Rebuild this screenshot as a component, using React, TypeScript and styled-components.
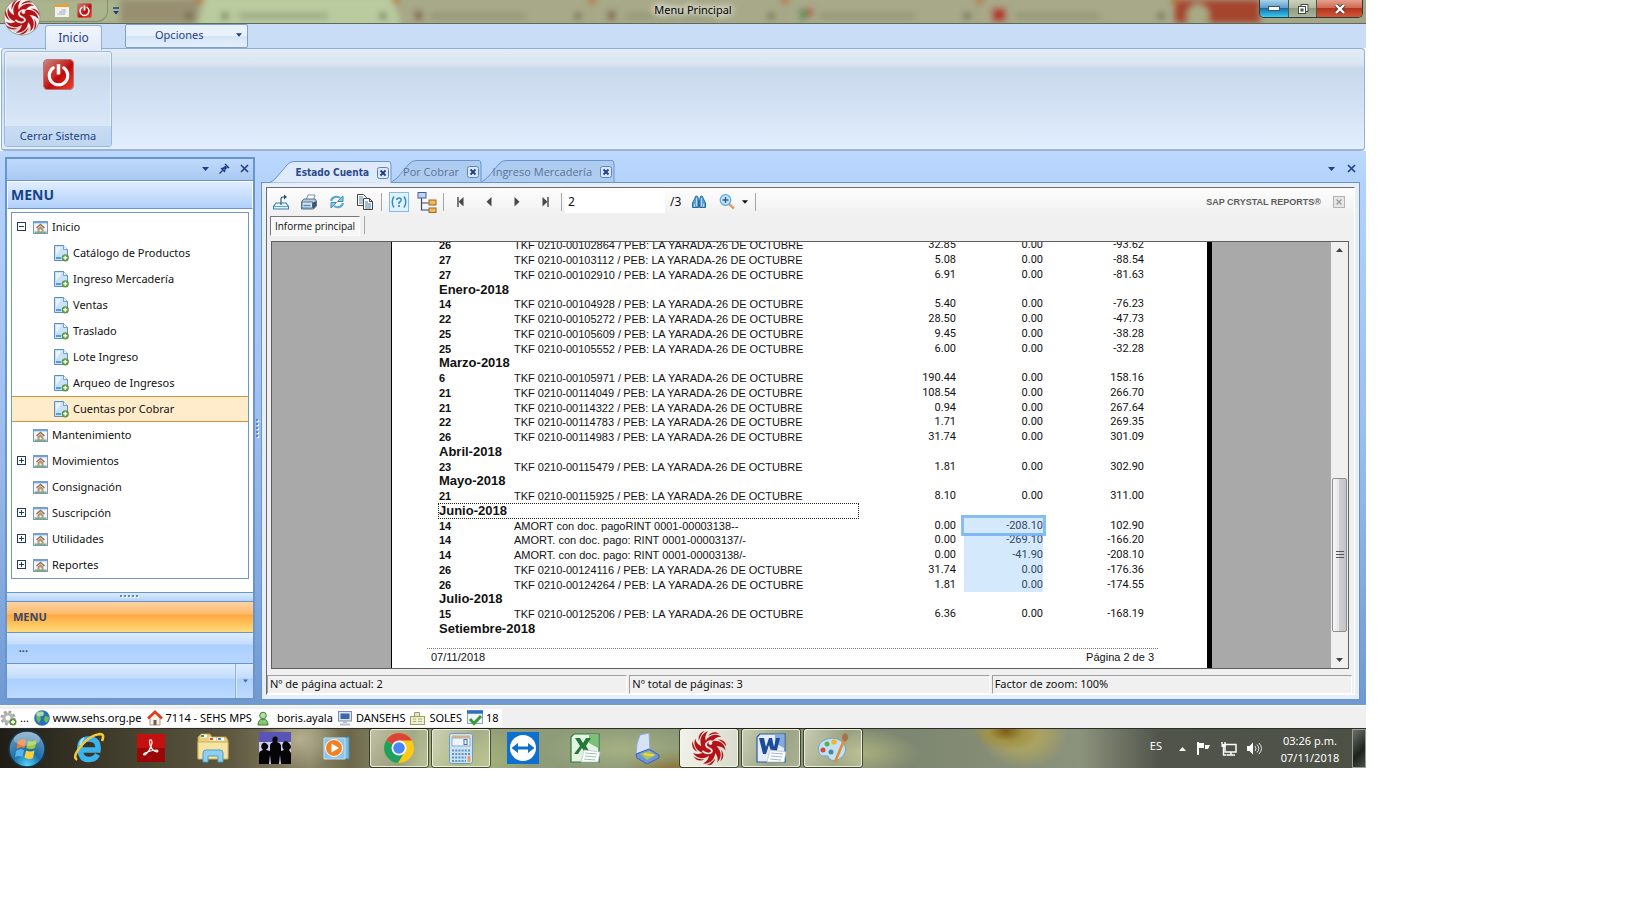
import React from 'react';
import styled, { createGlobalStyle, css } from 'styled-components';

const ui = '"Noto Sans", "Open Sans", sans-serif';
const report = '"Liberation Sans", Arial, sans-serif';
const navy = '#1e3f87';
const line = '#6a94cc';

const GlobalStyle = createGlobalStyle`
  *, *::before, *::after { box-sizing: border-box; }
  body { margin: 0; background: #fff; font-family: ${ui}; font-size: 11px; line-height: 16px; color: #111; }
  button { font: inherit; color: inherit; margin: 0; padding: 0; border: 0; background: none; }
  h1, h2, ul, p { margin: 0; padding: 0; }
  ul { list-style: none; }
  a { color: inherit; text-decoration: none; }
  svg { display: block; flex: none; }
`;

const Page = styled.div`
  min-height: 100vh;
  padding-right: 273px;
`;

/* ---------- title bar ---------- */

const TitleBar = styled.header`
  position: relative;
  display: grid;
  grid-template-columns: 1fr auto 1fr;
  height: 24px;
  padding: 0 3px 0 23px;
  background: #a5a686;
  border-bottom: 1px solid #5d6a63;
`;

const Glass = styled.svg`
  position: absolute;
  inset: 0;
  width: 100%;
  height: 23px;
`;

const OrbButton = styled.button`
  position: absolute;
  z-index: 2;
  left: 3px;
  top: -2px;
`;

const QuickAccess = styled.div`
  display: flex;
  align-items: center;
  gap: 8px;
  width: 85px;
  height: 22px;
  padding-left: 32px;
  border: solid rgba(90, 110, 80, 0.5);
  border-width: 0 1px 1px 0;
  border-radius: 0 0 11px 0;
`;

const QuickArea = styled.div`
  position: relative;
  display: flex;
  align-items: center;
  gap: 5px;
  height: 22px;
`;

const WindowTitle = styled.h1`
  position: relative;
  font-size: 11px;
  font-weight: 400;
  line-height: 20px;
  color: #000;
  text-shadow: 0 0 6px #fff, 0 0 8px #fff, 0 0 10px #fff;
`;

const WindowButtons = styled.div`
  position: relative;
  justify-self: end;
  display: flex;
  height: 18px;
  border: 1px solid #2d3a3a;
  border-top: 0;
  border-radius: 0 0 5px 5px;
  overflow: hidden;
`;

const WindowButton = styled.button<{ $kind: 'min' | 'max' | 'close' }>`
  display: grid;
  place-items: center;
  width: ${p => (p.$kind === 'close' ? 46 : 28)}px;
  border-left: ${p => (p.$kind === 'min' ? '0' : '1px solid #48584f')};
  background: ${p =>
    p.$kind === 'min'
      ? 'linear-gradient(#a9d3ea, #5c9fcd 45%, #1f6ba5 50%, #2fd0f5)'
      : p.$kind === 'max'
        ? 'linear-gradient(#cdd3bb, #b1b99f 45%, #8d9a85 50%, #a9b69b)'
        : 'linear-gradient(#e3a08e, #cf6a53 45%, #b3331b 50%, #d4573a)'};
`;

/* ---------- ribbon ---------- */

const RibbonTabs = styled.nav`
  display: flex;
  gap: 23px;
  height: 24px;
  padding-left: 45px;
  background: #c9ddf6;
  color: ${navy};
`;

const RibbonTab = styled.button`
  width: 57px;
  height: 25px;
  margin-top: 1px;
  z-index: 1;
  border: 1px solid #8fb0dc;
  border-bottom: 0;
  border-radius: 3px 3px 0 0;
  background: linear-gradient(#f2f7fd, #e3ebf6);
  font-size: 12px;
`;

const OptionsButton = styled.button`
  display: flex;
  align-items: center;
  width: 123px;
  height: 24px;
  padding: 0 5px 2px 29px;
  justify-content: space-between;
  border: 1px solid #7f9fce;
  border-radius: 2px;
  background: linear-gradient(#e9f1fb 50%, #d5e4f6 50%, #e4effc);
`;

const RibbonPanel = styled.section`
  display: flex;
  height: 103px;
  padding: 2px;
  margin: 0 1px;
  border: 1px solid #8fb0dc;
  border-bottom: 2px solid #9db2cd;
  border-radius: 4px;
  background: linear-gradient(#e4ecf6, #dbe6f2 14px, #c9d9ec 20px, #d3e2f4 60px, #e3effe);
`;

const RibbonGroup = styled.div`
  display: flex;
  flex-direction: column;
  justify-content: space-between;
  width: 108px;
  border: 1px solid #9ab8dd;
  border-radius: 3px;
  box-shadow: inset 0 0 0 1px rgba(255, 255, 255, 0.5);
  overflow: hidden;
`;

const BigButton = styled.button`
  align-self: center;
  padding-top: 7px;
`;

const GroupLabel = styled.div`
  height: 20px;
  line-height: 19px;
  text-align: center;
  color: ${navy};
  background: linear-gradient(#c8dcf2, #bfd6f0);
`;

/* ---------- workspace ---------- */

const Workspace = styled.main`
  display: flex;
  padding: 6px 6px 5px 5px;
  background: linear-gradient(#bcd8ff, #b4d2fb 30px, #9dbfee 50%, #7099d2);
`;

const Side = styled.aside`
  display: flex;
  flex-direction: column;
  width: 250px;
  flex: none;
  border: 2px solid ${line};
  background: #fff;
`;

const DockBar = styled.div`
  display: flex;
  align-items: center;
  justify-content: flex-end;
  gap: 10px;
  height: 22px;
  padding: 0 4px 2px 0;
  border-bottom: 1px solid ${line};
  background: linear-gradient(#c0d9fb, #a9c9f1);
`;

const SideTitle = styled.h2`
  height: 28px;
  padding-left: 3px;
  border: 1px solid #fff;
  border-bottom: 1px solid ${line};
  background: linear-gradient(#e0edff, #b0d0fa);
  color: #15428b;
  font-size: 14px;
  line-height: 25px;
`;

const Tree = styled.ul`
  margin: 3px 4px 13px;
  padding-top: 1px;
  border: 1px solid #7097c4;
`;

const TreeRow = styled.li<{ $child?: boolean; $active?: boolean }>`
  display: flex;
  align-items: center;
  gap: 4px;
  height: 26px;
  padding-left: ${p => (p.$child ? 42 : 5)}px;
  ${p =>
    p.$active &&
    css`
      background: #ffeccb;
      box-shadow: inset 0 1px #d9913b, inset 0 -1px #d9913b;
    `}
`;

const Toggle = styled.button<{ $hidden?: boolean }>`
  width: 10px;
  height: 10px;
  margin-right: 2px;
  visibility: ${p => (p.$hidden ? 'hidden' : 'visible')};
`;

const Grip = styled.div`
  display: grid;
  place-items: center;
  height: 10px;
  border: solid ${line};
  border-width: 1px 0;
  background: linear-gradient(#dcebff, #b4d2fa);
`;

const StackButton = styled.button<{ $active?: boolean }>`
  height: 31px;
  padding-left: 6px;
  border-bottom: 1px solid ${line};
  text-align: left;
  font-weight: 700;
  color: #32486e;
  background: ${p =>
    p.$active
      ? 'linear-gradient(#fcd3a2, #fdbb6c 12px, #ffa83d 13px, #ffdc7a)'
      : 'linear-gradient(#dfecff, #c3dcfd 11px, #abd0ff 12px, #b7d6ff)'};
`;

const StackFooter = styled.div`
  display: flex;
  justify-content: flex-end;
  flex: 1;
  min-height: 34px;
  background: linear-gradient(#dfecff, #c3dcfd 14px, #abd0ff 15px, #bddaff);
`;

const StackMore = styled.button`
  display: grid;
  place-items: center;
  width: 17px;
  border-left: 1px solid #d9e8fb;
  box-shadow: -1px 0 #8fb2e0;
`;

const Splitter = styled.div`
  display: grid;
  place-items: center;
  width: 6px;
  flex: none;
`;

/* ---------- documents ---------- */

const Documents = styled.section`
  display: flex;
  flex-direction: column;
  flex: 1;
  min-width: 0;
`;

const TabStrip = styled.div`
  display: flex;
  align-items: flex-end;
  height: 25px;
  padding: 0 4px 0 9px;
`;

const DocTab = styled.div<{ $active?: boolean; $width: number }>`
  position: relative;
  display: flex;
  align-items: center;
  justify-content: flex-end;
  gap: 8px;
  width: ${p => p.$width}px;
  height: 22px;
  padding: 2px 3px 0 0;
  margin-bottom: ${p => (p.$active ? -1 : 0)}px;
  z-index: ${p => (p.$active ? 1 : 0)};
  color: ${p => (p.$active ? '#2c4c8c' : '#5a7496')};
  button { position: relative; }
`;

const DocTabLabel = styled.button<{ $active?: boolean }>`
  white-space: nowrap;
  font-family: ${p => (p.$active ? '"DejaVu Sans Condensed", sans-serif' : '"Open Sans", sans-serif')};
  font-size: ${p => (p.$active ? 10 : 11)}px;
  font-weight: ${p => (p.$active ? 700 : 400)};
`;

const TabShape = styled.svg`
  position: absolute;
  inset: 0;
`;

const StripTools = styled.div`
  display: flex;
  align-items: center;
  gap: 12px;
  height: 25px;
  padding-bottom: 2px;
  margin-left: auto;
`;

const DocBody = styled.div`
  display: flex;
  flex-direction: column;
  flex: 1;
  padding: 4px;
  border: 1px solid ${line};
  background: #e6eefa;
`;

const Viewer = styled.div`
  display: flex;
  flex-direction: column;
  border: 1px solid #6c6c6c;
  border-right-color: #fff;
  border-bottom-color: #fff;
  background: #f0f0f0;
`;

const Toolbar = styled.div`
  display: flex;
  align-items: center;
  height: 28px;
  background: linear-gradient(#fdfdfd, #f0f0f0);
`;

const ToolButton = styled.button<{ $wide?: boolean; $framed?: boolean }>`
  display: flex;
  align-items: center;
  justify-content: center;
  gap: 7px;
  width: ${p => (p.$framed ? 20 : p.$wide ? 40 : 28)}px;
  height: 20px;
  ${p =>
    p.$framed &&
    css`
      margin: 0 4px;
      border: 1px solid #7fbdec;
      background: #e2f1fc;
    `}
`;

const Divider = styled.span`
  width: 1px;
  height: 18px;
  margin: 0 3px 0 2px;
  background: #a6a6a6;
`;

const PageInput = styled.input`
  width: 100px;
  height: 22px;
  padding: 0 0 2px 3px;
  border: 0;
  background: #fff;
  font: 12px/20px ${ui};
  color: #111;
`;

const PageTotal = styled.span`
  width: 20px;
  padding-left: 5px;
  font-size: 12px;
`;

const Brand = styled.span`
  margin-left: auto;
  margin-right: 12px;
  font: 700 9px/14px ${report};
  color: #5c5c5c;
`;

const BrandClose = styled.button`
  margin-right: 9px;
`;

const ReportTabs = styled.div`
  display: flex;
  align-items: flex-start;
  gap: 2px;
  height: 25px;
  padding-left: 3px;
`;

const ReportTab = styled.button`
  height: 20px;
  width: 90px;
  border: 1px solid #fff;
  border-top-color: #777;
  border-left-color: #777;
  background: #f8f8f8;
  font-family: "Open Sans", sans-serif;
  font-size: 10px;
  line-height: 18px;
`;

const Viewport = styled.div`
  display: flex;
  height: 428px;
  margin: 0 5px 0 4px;
  border: 1px solid #5f5f5f;
  background: #a9a9a9;
`;

const Canvas = styled.div`
  display: flex;
  align-items: flex-end;
  justify-content: center;
  flex: 1;
  min-width: 0;
  overflow: hidden;
`;

const Sheet = styled.article`
  width: 821px;
  flex: none;
  padding: 0 49px 0 35px;
  border: solid #000;
  border-width: 0 5px 0 1px;
  background: #fff;
  font-family: ${report};
`;

const Ledger = styled.table`
  table-layout: fixed;
  width: 705px;
  margin-left: 12px;
  border-collapse: collapse;
  font-size: 11px;
  line-height: 14px;
  tr { height: 15px; }
  tr:nth-child(4n + 1) { height: 14px; }
  th, td { padding: 0; text-align: left; white-space: nowrap; }
`;

const Col = styled.col<{ $w: number }>`
  width: ${p => p.$w}px;
`;

const Month = styled.th`
  font-size: 13px;
`;

const MonthBox = styled.span<{ $focus?: boolean }>`
  display: block;
  width: 419px;
  outline: ${p => (p.$focus ? '1px dotted #222' : 'none')};
`;

const Amount = styled.td<{ $mark?: 'range' | 'cell'; $pad?: boolean }>`
  && {
    font-family: Roboto, sans-serif;
    text-align: right;
    padding-right: ${p => (p.$pad ? 8 : 0)}px;
  }
  ${p => p.$mark && css`background: #d5e9fd; color: #33475f;`}
  ${p => p.$mark === 'cell' && css`outline: 3px solid rgba(104, 172, 243, 0.8);`}
`;

const SheetFooter = styled.footer`
  display: flex;
  justify-content: space-between;
  margin-top: 12px;
  padding: 0 4px 3px 4px;
  border-top: 1px dotted #777;
  font-size: 11px;
`;

const ScrollBar = styled.div`
  display: flex;
  flex-direction: column;
  align-items: center;
  width: 17px;
  padding: 6px 0;
  background: #f0f0f0;
`;

const ScrollGap = styled.span<{ $grow: number }>`
  flex: ${p => p.$grow} 1 0;
`;

const Thumb = styled.div`
  display: grid;
  place-items: center;
  flex: 152 1 0;
  width: 15px;
  border: 1px solid #8f8f8f;
  border-radius: 2px;
  background: linear-gradient(90deg, #f6f6f6, #e6e6e8 45%, #cdced1 50%, #c3c4c8);
`;

const ViewerStatus = styled.div`
  display: grid;
  grid-template-columns: repeat(3, 1fr);
  gap: 2px;
  padding: 6px 2px 0 0;
`;

const StatusField = styled.div`
  height: 19px;
  padding-left: 2px;
  border: 1px solid #9f9f9f;
  border-right-color: #fff;
  border-bottom-color: #fff;
  line-height: 16px;
`;

/* ---------- bottom bars ---------- */

const InfoBar = styled.footer`
  display: flex;
  height: 23px;
  padding-top: 3px;
  border-top: 1px solid #fff;
  background: #f0f0f0;
`;

const InfoList = styled.ul`
  display: flex;
  align-items: center;
  gap: 5px;
  width: 502px;
  height: 18px;
  background: #fff;
  color: #000;
`;

const InfoItem = styled.li<{ $gap?: number }>`
  display: flex;
  align-items: center;
  gap: ${p => p.$gap ?? 3}px;
`;

const TaskBar = styled.footer`
  display: flex;
  align-items: stretch;
  height: 40px;
  border-top: 1px solid #2b2d26;
  background:
    radial-gradient(ellipse 34px 20px at 1006px 2px, #7d5c18 0, #a09245 50%, transparent 100%),
    radial-gradient(ellipse 44px 34px at 1024px 6px, #b0a558 0, #a5a066 50%, transparent 100%),
    radial-gradient(ellipse 60px 30px at 470px 30px, #a9b878, transparent),
    radial-gradient(ellipse 80px 24px at 620px 20px, #a5b183, transparent),
    radial-gradient(ellipse 50px 20px at 670px 40px, #8a7436, transparent),
    radial-gradient(ellipse 40px 30px at 300px 10px, #b5af8f, transparent),
    radial-gradient(ellipse 60px 24px at 860px 24px, #a9b07e, transparent),
    linear-gradient(90deg, #1f1d16 0, #45412f 130px, #5e5841 230px, #8b8768 310px, #6d674a 350px, #9ca57c 420px, #8d9a78 560px, #8b9678 800px, #7d8670 900px, #8c937c 1080px, #50544b 1160px, #4d5045 100%);
`;

const StartButton = styled.button`
  width: 54px;
  padding-left: 8px;
  margin-right: 6px;
`;

const TaskList = styled.div`
  display: flex;
  gap: 4px;
`;

const TaskButton = styled.button<{ $state: 'pinned' | 'open' | 'front' }>`
  display: grid;
  place-items: center;
  width: 58px;
  height: 38px;
  ${p =>
    p.$state !== 'pinned' &&
    css`
      border: 1px solid rgba(250, 250, 235, 0.8);
      border-radius: 3px;
      box-shadow: 0 0 0 1px rgba(20, 25, 10, 0.65);
      background: ${p.$state === 'front'
        ? 'linear-gradient(100deg, #f2f2ea, #d8dacd)'
        : 'linear-gradient(115deg, rgba(240,240,220,.6), rgba(200,205,170,.25) 60%, rgba(230,230,200,.35))'};
    `}
`;

const Tray = styled.div`
  display: flex;
  align-items: center;
  margin-left: auto;
  color: #fff;
`;

const TrayIcons = styled.div`
  display: flex;
  align-items: center;
  gap: 9px;
  margin: 0 17px 0 17px;
`;

const Language = styled.span`
  padding-bottom: 5px;
`;

const Clock = styled.time`
  width: 62px;
  margin-right: 11px;
  text-align: center;
  line-height: 17px;
`;

const ShowDesktop = styled.button`
  width: 14px;
  height: 100%;
  border: 1px solid #98a096;
  background: linear-gradient(135deg, #6a7068, #1e221d 60%, #4b504a);
`;

/* ---------- drawings ---------- */

const blade = 'M-4.500-5.500C-2-12 5-17 13-12C8-12 5-10 3-6C1-4-2-4-4.500-5.500Z';
const spark = 'M-1-13C2-17 7-18 11-15C7-15.500 3-15 -1-13Z';

const Swirl = ({ size, framed = false }: { size: number; framed?: boolean }) => (
  <svg width={size} height={size} viewBox="-18 -18 36 36" aria-hidden="true">
    {framed && (
      <>
        <circle r="17.500" fill="#8f9789" />
        <circle r="16.600" fill="#f4f4f2" />
        <ellipse cy="12" rx="9" ry="3.500" fill="#d5d5d3" />
      </>
    )}
    <g fill="#b51218" transform={framed ? 'scale(.9)' : undefined}>
      {[0, 51, 103, 154, 206, 257, 309].map(a => (
        <g key={a} transform={`rotate(${a})`}>
          <path d={blade} />
          <path d={spark} />
        </g>
      ))}
      <circle r="6" />
      <path d="M4-7C-2-8-5-4-2-1C1 1 4 1 3 4C1 7-4 6-7 3" fill="none" stroke="#f3e9e6" strokeWidth="1.800" />
      <circle cx="1.500" cy="-5" r="1.800" fill="#f3e9e6" />
    </g>
  </svg>
);

const PowerIcon = ({ size }: { size: number }) => (
  <svg width={size} height={size} viewBox="0 0 30 30" aria-hidden="true">
    <defs>
      <linearGradient id={`pw${size}`} x1="0" y1="0" x2="1" y2="1">
        <stop offset="0" stopColor="#c98a86" />
        <stop offset=".45" stopColor="#c42a26" />
        <stop offset=".55" stopColor="#c00a0a" />
        <stop offset="1" stopColor="#f0432f" />
      </linearGradient>
    </defs>
    <rect x=".5" y=".5" width="29" height="29" rx="4" fill={`url(#pw${size})`} stroke="#b9776f" />
    <path d="M10 8.500a9 9 0 1 0 10 0" fill="none" stroke="#fff" strokeWidth="3" strokeLinecap="round" />
    <path d="M15 5v10" stroke="#fff" strokeWidth="3.400" />
  </svg>
);

const Caret = ({ color = navy, up = false, size = 7 }: { color?: string; up?: boolean; size?: number }) => (
  <svg width={size} height="4" viewBox="0 0 7 4" aria-hidden="true">
    <path d={up ? 'M0 4L3.500 0L7 4Z' : 'M0 0H7L3.500 4Z'} fill={color} />
  </svg>
);

const Cross = () => (
  <svg width="9" height="9" viewBox="0 0 9 9" aria-hidden="true">
    <path d="M1 1l7 7M8 1L1 8" stroke={navy} strokeWidth="1.600" />
  </svg>
);

const Pin = () => (
  <svg width="11" height="11" viewBox="0 0 11 11" fill="none" stroke={navy} strokeWidth="1.300" aria-hidden="true">
    <path d="M.5 10.500l3.500-3.500M2 5l4 4M6 1l4 4M3 5.500l3-1 1.500-3M5.500 8l1-2.500 3-1.500" />
    <path d="M4 6l3-2.500" strokeWidth="2" />
  </svg>
);

const BoxedCross = ({ gray = false }: { gray?: boolean }) => (
  <svg width="12" height="12" viewBox="0 0 12 12" fill="none" aria-hidden="true">
    <rect x=".5" y=".5" width="11" height="11" rx={gray ? 0 : 2} fill={gray ? '#e6e6e6' : '#d9e8fb'} stroke={gray ? '#b3b3b3' : '#5f82b5'} />
    <path d="M3.500 3.500l5 5M8.500 3.500l-5 5" stroke={gray ? '#999' : navy} strokeWidth={gray ? 1.2 : 1.8} />
  </svg>
);

const HomeFolder = () => (
  <svg width="15" height="13" viewBox="0 0 15 13" aria-hidden="true">
    <rect x=".5" y=".5" width="14" height="12" fill="#f2f6fb" stroke="#7d98bd" />
    <path d="M1 1.500h13" stroke="#6fa3e0" strokeWidth="1.600" />
    <path d="M1.500 11.200h12" stroke="#6dab64" strokeWidth="1.400" />
    <path d="M3.500 7L7.500 3.500L11.500 7" fill="none" stroke="#9a6e4a" strokeWidth="1.400" />
    <path d="M4.500 7.500v3.500h2V8.500h2V11h2V7.500L7.500 5Z" fill="#b5977b" />
  </svg>
);

const PageAdd = () => (
  <svg width="15" height="17" viewBox="0 0 15 17" aria-hidden="true">
    <path d="M.5.500h9l4 4V15.500h-13Z" fill="#c9e2f8" stroke="#5e8dc2" />
    <path d="M2 2h6L2 10Z" fill="#e9f4fd" />
    <path d="M9.500.500v4h4" fill="#f4faff" stroke="#5e8dc2" strokeWidth=".8" />
    <path d="M2 13h5" stroke="#2e8fdc" strokeWidth="1.600" />
    <circle cx="11.300" cy="12.800" r="3.600" fill="#5f9a3c" />
    <path d="M11.300 10.800v4M9.300 12.800h4" stroke="#fff" strokeWidth="1.500" />
  </svg>
);

const Expander = ({ open }: { open?: boolean }) => (
  <svg width="10" height="10" viewBox="0 0 10 10" fill="none" stroke="#1f3c68" aria-hidden="true">
    <rect x=".5" y=".5" width="8" height="8" fill="#fff" />
    <path d={open ? 'M2 4.500h5' : 'M2 4.500h5M4.500 2v5'} />
  </svg>
);

const Dots = ({ vertical = false, n }: { vertical?: boolean; n: number }) => (
  <svg width={vertical ? 4 : n * 4} height={vertical ? n * 4 : 4} aria-hidden="true">
    {Array.from({ length: n }, (_, i) => (
      <g key={i} transform={vertical ? `translate(0 ${i * 4})` : `translate(${i * 4} 0)`}>
        <rect x="1" y="1" width="2" height="2" fill="#fff" />
        <rect width="2" height="2" fill="#5f86bd" />
      </g>
    ))}
  </svg>
);

const Calendar = () => (
  <svg width="14" height="13" viewBox="0 0 14 13" aria-hidden="true">
    <rect width="14" height="13" fill="#f1f1ee" />
    <rect width="14" height="3" fill="#e3a23c" />
    <path d="M2 10h8M4 8h7M6 6h5M9 5v6M6 7v4" stroke="#b4bdd0" />
  </svg>
);

const Draw = ({ w = 18, h = 18, children }: { w?: number; h?: number; children: React.ReactNode }) => (
  <svg width={w} height={h} viewBox={`0 0 ${w} ${h}`} fill="none" aria-hidden="true">
    {children}
  </svg>
);

const ExportIcon = () => (
  <Draw>
    <path d="M4 10h10l2.500 3.500v2.500h-15v-2.500Z" fill="#e6f3fa" stroke="#3f7fa5" strokeWidth="1.100" />
    <path d="M2 13.500h14" stroke="#56a9cf" />
    <path d="M9 12V5.500q0-1.500 2-1.500h2" stroke="#25506f" strokeWidth="1.100" />
    <path d="M12 1.500L15 4l-3 2.500Z" fill="#25506f" />
  </Draw>
);
const PrintIcon = () => (
  <Draw>
    <path d="M6 7L8 2h7l-1.500 5Z" fill="#fff" stroke="#7f93ab" />
    <path d="M1.500 8.500L4 6h11l1.500 2v5l-3 3h-12Z" fill="#b7c9da" stroke="#59748f" />
    <path d="M2 9h10.500v6H2Z" fill="#d7e5f1" stroke="#59748f" />
    <path d="M3.500 12.500h7" stroke="#4c90c8" strokeWidth="1.500" />
    <path d="M12.500 10l3.500-2v5l-3 3Z" fill="#3b5470" />
  </Draw>
);
const RefreshIcon = () => (
  <Draw w={16} h={16}>
    <path d="M2 7a5.500 5 0 0 1 9-3" stroke="#5fabd0" strokeWidth="2.200" />
    <path d="M14 2v5.500H8.500Z" fill="#8fcbe8" stroke="#3c8bb5" />
    <path d="M14 9a5.500 5 0 0 1-9 3" stroke="#5fabd0" strokeWidth="2.200" />
    <path d="M2 14V8.500h5.500Z" fill="#8fcbe8" stroke="#3c8bb5" />
  </Draw>
);
const CopyIcon = () => (
  <Draw>
    <path d="M1.500 1.500h6l3 3v8h-9Z" fill="#fff" stroke="#444" />
    <path d="M3 4h4M3 6h5M3 8h5M3 10h5" stroke="#5d87ad" />
    <path d="M7.500 5.500h6l3 3v8h-9Z" fill="#fff" stroke="#444" />
    <path d="M13.500 5.500v3h3" stroke="#444" />
    <path d="M9 9h3M9 11h6M9 13h6M9 15h6" stroke="#3f7cad" />
  </Draw>
);
const ParamIcon = () => (
  <Draw w={16} h={16}>
    <path d="M3 2.500Q-.5 8 3 13.500M13 2.500Q16.500 8 13 13.500M5.800 6Q5.800 4 8 4T10.200 6Q10.200 7.500 8 8.500V10" stroke="#2e86cf" strokeWidth="1.400" />
    <path d="M8 11v2" stroke="#2e86cf" strokeWidth="1.600" />
  </Draw>
);
const GroupTreeIcon = () => (
  <Draw w={20} h={21}>
    <path d="M4.500 6v12H12M4.500 11H12" stroke="#34496b" strokeWidth="1.200" />
    <rect x="1" y=".5" width="8" height="5.500" fill="#bcd3f2" stroke="#4a5e94" />
    <rect x="12" y="8" width="7" height="5" fill="#f5b94c" stroke="#8d6a35" />
    <rect x="12" y="16" width="7" height="4.500" fill="#f5b94c" stroke="#8d6a35" />
  </Draw>
);
const NavIcon = ({ dir, end }: { dir: 'l' | 'r'; end?: boolean }) => (
  <Draw w={8} h={10}>
    <path d={dir === 'l' ? 'M6.500 0v9.500L1.500 4.800Z' : 'M1.500 0v9.500L6.500 4.800Z'} fill="#484848" />
    {end && <path d={dir === 'l' ? 'M1 0v10' : 'M7 0v10'} stroke="#484848" strokeWidth="1.400" />}
  </Draw>
);
const FindIcon = () => (
  <Draw w={14} h={14}>
    <path d="M3 3q0-2 1.500-2T6 3l.5 3v6.500h-6V8ZM8 3q0-2 1.500-2T11 3l2.500 5v4.500h-6V6Z" fill="#5ba2d4" stroke="#2b6b9b" />
    <path d="M2.500 9v3M4.500 3v8M9.500 3v8M11.500 9v3" stroke="#b5dcf5" />
  </Draw>
);
const ZoomIcon = () => (
  <Draw w={16} h={16}>
    <path d="M10 10l5 4.500" stroke="#d9a06c" strokeWidth="2.400" />
    <circle cx="6.500" cy="6" r="5.300" fill="#c5e3f8" stroke="#62a6d8" strokeWidth="1.200" />
    <path d="M6.500 3v6M3.500 6h6" stroke="#285f8e" strokeWidth="1.400" />
  </Draw>
);

const GearIcon = () => (
  <Draw w={17} h={16}>
    <circle cx="8" cy="8" r="5.500" stroke="#a2a2a2" strokeWidth="4" strokeDasharray="2.400 1.900" />
    <circle cx="8" cy="8" r="4" stroke="#b5b5b5" strokeWidth="3" />
    <circle cx="13" cy="12" r="3.500" fill="#58943b" />
    <path d="M13 10v4M11 12h4" stroke="#fff" strokeWidth="1.300" />
  </Draw>
);
const GlobeIcon = () => (
  <Draw w={16} h={16}>
    <circle cx="8" cy="8" r="7.800" fill="#2a70b8" />
    <path d="M3 3q4-3 7-1l-1 3-3 1 1 3-2 4Q1 9 3 3ZM11 6l4 1q0 4-3 6l-2-3Z" fill="#69bd55" />
    <ellipse cx="6" cy="4" rx="4" ry="2.500" fill="#fff" opacity=".45" />
  </Draw>
);
const HouseIcon = () => (
  <Draw w={16} h={16}>
    <path d="M3 8v7h10V8L8 3Z" fill="#f5efe8" stroke="#a99b8d" />
    <path d="M1 8.500L8 2l7 6.500" stroke="#d9411d" strokeWidth="2.800" />
    <path d="M6.500 10h3v5h-3Z" fill="#6c5f58" />
  </Draw>
);
const UserIcon = () => (
  <Draw w={12} h={15}>
    <path d="M1 14q0-6 5-6t5 6Z" fill="#86c774" stroke="#3b7f33" />
    <circle cx="6" cy="4.500" r="3.300" fill="#b2dfa2" stroke="#3b7f33" />
  </Draw>
);
const ScreenIcon = () => (
  <Draw w={15} h={15}>
    <rect x=".5" y=".5" width="13" height="9.500" fill="#dce4ef" stroke="#7b8da8" />
    <rect x="2.500" y="2.500" width="9" height="5.500" fill="#3e66ad" />
    <path d="M5 10h4v2H5ZM2 12.500h10v2H2Z" fill="#b5bfcc" />
  </Draw>
);
const CashIcon = () => (
  <Draw w={16} h={15}>
    <path d="M4.500 1.500h5v4h-5Z" fill="#e7e8c2" stroke="#96a066" />
    <rect x=".5" y="5.500" width="14" height="8" fill="#eef0d0" stroke="#96a066" />
    <path d="M3 8h3M3 10.500h3M8 8h4M8 10.500h4" stroke="#a9b07a" />
  </Draw>
);
const CheckIcon = () => (
  <Draw w={16} h={16}>
    <rect x=".5" y="1" width="15" height="12.500" fill="#f2f6fa" stroke="#8aa5c4" />
    <path d="M0 2h16" stroke="#2f6fbc" strokeWidth="3.500" />
    <path d="M3 9l4 4.500L14 6" stroke="#3b9a34" strokeWidth="3" />
  </Draw>
);

const StartOrb = () => (
  <svg width="38" height="38" viewBox="0 0 38 38" aria-hidden="true">
    <defs>
      <radialGradient id="orb" cx=".5" cy=".95" r="1">
        <stop offset="0" stopColor="#54d4f5" />
        <stop offset=".4" stopColor="#1b6fa8" />
        <stop offset="1" stopColor="#7fa3bd" />
      </radialGradient>
    </defs>
    <circle cx="19" cy="19" r="18" fill="url(#orb)" stroke="#17364f" strokeWidth="1.500" />
    <path d="M10 11q4-3 8-1l-1.500 8q-4-2-8 1Z" fill="#f07a30" />
    <path d="M20 10.500q4 2 8.500-.5L27 18q-4 2-8.500 0Z" fill="#9ccc3c" />
    <path d="M8 21q4-3 8-1l-1.500 7q-4-2-7.500.5Z" fill="#56b4ee" />
    <path d="M18 20.500q4 2 8.500 0L25 28q-4 2-8.500-.5Z" fill="#fbd03f" />
    <ellipse cx="19" cy="9" rx="13" ry="7" fill="#fff" opacity=".28" />
  </svg>
);
const ExplorerE = () => (
  <Draw w={32} h={32}>
    <path d="M8 18h17q1-11-9-11T7 17.500T16 27.500q6 0 8.500-5" stroke="#3db3ee" strokeWidth="5.500" />
    <path d="M11 6q-3 2-4 7" stroke="#a6e3fb" strokeWidth="2" />
    <path d="M4 28q-5-3 4-14T27 2q5 0 2 7" stroke="#f6c93a" strokeWidth="2.600" />
  </Draw>
);
const ReaderIcon = () => (
  <Draw w={28} h={28}>
    <rect width="28" height="28" fill="#c4100f" />
    <rect y="14" width="28" height="14" fill="#9a0707" />
    <path d="M13 6q2-1 2 3-2 8-7 12-3 0 0-2 6-3 12-3 2 1 0 2-5-1-7-7-1-4 0-5Z" stroke="#fff" strokeWidth="1.200" />
  </Draw>
);
const FolderIcon = () => (
  <Draw w={34} h={30}>
    <path d="M2 4l3-3h9l2 3h14l2 3v18H2Z" fill="#e8cf7b" stroke="#b49545" />
    <path d="M5 3h6M13 6h7M21 6h7" stroke="#fff" strokeWidth="3" />
    <path d="M5 3h3" stroke="#3d9a4b" strokeWidth="2" />
    <path d="M14 6h3" stroke="#d9482f" strokeWidth="2" />
    <path d="M22 6h3" stroke="#3c87cf" strokeWidth="2" />
    <path d="M2 9h30v17H2Z" fill="#f5e5a0" stroke="#cdb060" />
    <path d="M7 29V20q0-3 3-3h14q3 0 3 3v9h-5v-6H12v6Z" fill="#8fd0ef" stroke="#4c9cc9" />
  </Draw>
);
const PeopleIcon = () => (
  <Draw w={32} h={32}>
    <rect width="32" height="32" fill="#5954b5" />
    <rect y="10" width="32" height="22" fill="#cfcdf0" />
    <path d="M0 32V22q0-3 4-4-3-3-1-6t5 0-1 6l4 1V14q0-3 3-4-2-5 2-5.500T18 10q4 1 4 4v5l3-1q-3-3-1-7t6 0 0 7l2 3v11H22l-1-9-1 9h-8l-1-9-1 9Z" fill="#050507" />
  </Draw>
);
const MediaIcon = () => (
  <Draw w={28} h={26}>
    <path d="M5 4l21-2v22L5 22Z" fill="#7fb9de" stroke="#4a8cba" />
    <path d="M1 3h21v21H1Z" fill="#8cc6e8" stroke="#bfe2f5" />
    <circle cx="11" cy="13" r="8.500" fill="#f08224" stroke="#fff" />
    <path d="M8.500 8.500L16 13l-7.500 4.500Z" fill="#fff" />
  </Draw>
);
const ChromeIcon = () => (
  <Draw w={32} h={32}>
    <circle cx="16" cy="16" r="15" fill="#fbc918" />
    <path d="M16 16L3 8.500A15 15 0 0 1 29 8.500H16Z" fill="#dc4437" />
    <path d="M3 8.500A15 15 0 0 0 15 31l7-11.500L16 16Z" fill="#1ea05f" />
    <circle cx="16" cy="16" r="7.500" fill="#fff" />
    <circle cx="16" cy="16" r="5.800" fill="#4587f3" />
  </Draw>
);
const CalcIcon = () => (
  <Draw w={24} h={31}>
    <rect x=".5" y=".5" width="23" height="30" rx="2" fill="#cfe3f4" stroke="#6b9cc8" />
    <path d="M3 3.500h18" stroke="#f0a860" strokeWidth="2" />
    <rect x="3" y="5" width="18" height="8" fill="#edf5fb" stroke="#86add0" />
    <rect x="15" y="6.500" width="3" height="5" stroke="#4e6f92" />
    <path d="M3 17.500h18M3 21h18M3 24.500h14M3 28h14" stroke="#5f92c5" strokeWidth="2" strokeDasharray="2 1.200" />
    <path d="M20 23v6" stroke="#f09a45" strokeWidth="2.500" />
  </Draw>
);
const RemoteIcon = () => (
  <Draw w={32} h={32}>
    <rect width="32" height="32" fill="#0d6fd0" />
    <circle cx="16" cy="16" r="13" fill="#fff" />
    <path d="M4.500 16L11 11v3.500h10V11l6.500 5L21 21v-3.500H11V21Z" fill="#0d6fd0" />
  </Draw>
);
const SheetIcon = ({ word = false }: { word?: boolean }) => (
  <Draw w={31} h={30}>
    <path d="M4 1h25v28H1V4Z" fill={word ? '#e3ecf8' : '#e4f2e1'} stroke={word ? '#2b5ba3' : '#2c7a3b'} strokeWidth="1.200" />
    <path d="M19 2h9v13l-9-5Z" fill={word ? '#86a9dd' : '#7cc077'} />
    {word ? (
      <path d="M3 5h5l2 9 3-9h3l2 9 2-9h4l-4 16h-4l-3-9-3 9H7Z" fill="#1d4b9b" />
    ) : (
      <path d="M5 5h5l3 5 3-5h5l-5 8 5 8h-5l-4-6-4 6H4l6-8Z" fill="#23793a" />
    )}
    <path d="M14 17l16 2-2 10H11Z" fill="#fff" stroke="#b8c5cf" strokeWidth=".8" />
    <path d="M15 20l12 1M15 23l11 1M14 26l11 1" stroke={word ? '#9fb4d3' : '#9cc2a1'} />
  </Draw>
);
const ScannerIcon = () => (
  <Draw w={27} h={31}>
    <path d="M6 2l9-2 1 17-14 4Q2 10 6 2Z" fill="#d6e3f5" stroke="#8fa9d3" />
    <path d="M2 21l13-5 10 6v3L13 31 3 25Z" fill="#6b93de" stroke="#3f63ab" />
    <path d="M6 21l9-3 7 4-9 5Z" fill="#a9c25c" />
    <path d="M10 21l5 1 5 0" stroke="#f2d646" strokeWidth="2" />
  </Draw>
);
const PaintIcon = () => (
  <Draw w={32} h={31}>
    <path d="M2 20Q-1 9 10 6t17 5q4 7-2 13t-13 2q0-4-4-3t-6-3Z" fill="#c4e1f2" stroke="#71a3c6" />
    <circle cx="6" cy="17" r="2.500" fill="#d64a3c" />
    <circle cx="10" cy="11" r="2.500" fill="#58b04f" />
    <circle cx="17" cy="9" r="2.700" fill="#f0b62e" />
    <circle cx="14" cy="19" r="2.500" fill="#4687a5" />
    <path d="M28 5L18 29" stroke="#e08b36" strokeWidth="2.600" />
    <path d="M25 6q-1-5 4-6 3 3 2 6l-3 3Z" fill="#a67448" />
  </Draw>
);

/* ---------- data ---------- */

type Node = { label: string; child?: boolean; active?: boolean; toggle?: 'open' | 'closed' };
const nodes: Node[] = [
  { label: 'Inicio', toggle: 'open' },
  { label: 'Catálogo de Productos', child: true },
  { label: 'Ingreso Mercadería', child: true },
  { label: 'Ventas', child: true },
  { label: 'Traslado', child: true },
  { label: 'Lote Ingreso', child: true },
  { label: 'Arqueo de Ingresos', child: true },
  { label: 'Cuentas por Cobrar', child: true, active: true },
  { label: 'Mantenimiento' },
  { label: 'Movimientos', toggle: 'closed' },
  { label: 'Consignación' },
  { label: 'Suscripción', toggle: 'closed' },
  { label: 'Utilidades', toggle: 'closed' },
  { label: 'Reportes', toggle: 'closed' },
];

type Entry = { month: string; focus?: boolean } | { day: string; text: string; n: [string, string, string]; mark?: 'range' | 'cell' };
const tkf = (day: string, doc: string, debit: string, balance: string, mark?: 'range'): Entry => ({
  day,
  text: `TKF 0210-${doc} / PEB: LA YARADA-26 DE OCTUBRE`,
  n: [debit, '0.00', balance],
  mark,
});

const entries: Entry[] = [
  tkf('26', '00102864', '32.85', '-93.62'),
  tkf('27', '00103112', '5.08', '-88.54'),
  tkf('27', '00102910', '6.91', '-81.63'),
  { month: 'Enero-2018' },
  tkf('14', '00104928', '5.40', '-76.23'),
  tkf('22', '00105272', '28.50', '-47.73'),
  tkf('25', '00105609', '9.45', '-38.28'),
  tkf('25', '00105552', '6.00', '-32.28'),
  { month: 'Marzo-2018' },
  tkf('6', '00105971', '190.44', '158.16'),
  tkf('21', '00114049', '108.54', '266.70'),
  tkf('21', '00114322', '0.94', '267.64'),
  tkf('22', '00114783', '1.71', '269.35'),
  tkf('26', '00114983', '31.74', '301.09'),
  { month: 'Abril-2018' },
  tkf('23', '00115479', '1.81', '302.90'),
  { month: 'Mayo-2018' },
  tkf('21', '00115925', '8.10', '311.00'),
  { month: 'Junio-2018', focus: true },
  { day: '14', text: 'AMORT con doc. pagoRINT 0001-00003138--', n: ['0.00', '-208.10', '102.90'], mark: 'cell' },
  { day: '14', text: 'AMORT. con doc. pago: RINT 0001-00003137/-', n: ['0.00', '-269.10', '-166.20'], mark: 'range' },
  { day: '14', text: 'AMORT. con doc. pago: RINT 0001-00003138/-', n: ['0.00', '-41.90', '-208.10'], mark: 'range' },
  tkf('26', '00124116', '31.74', '-176.36', 'range'),
  tkf('26', '00124264', '1.81', '-174.55', 'range'),
  { month: 'Julio-2018' },
  tkf('15', '00125206', '6.36', '-168.19'),
  { month: 'Setiembre-2018' },
];

const docTabs = [
  { label: 'Estado Cuenta', width: 122, active: true },
  { label: 'Por Cobrar', width: 90 },
  { label: 'Ingreso Mercadería', width: 133 },
];

const tasks: { name: string; state: 'pinned' | 'open' | 'front'; icon: React.ReactNode }[] = [
  { name: 'Internet Explorer', state: 'pinned', icon: <ExplorerE /> },
  { name: 'Adobe Reader', state: 'pinned', icon: <ReaderIcon /> },
  { name: 'Explorador', state: 'pinned', icon: <FolderIcon /> },
  { name: 'Contactos', state: 'pinned', icon: <PeopleIcon /> },
  { name: 'Reproductor', state: 'pinned', icon: <MediaIcon /> },
  { name: 'Chrome', state: 'open', icon: <ChromeIcon /> },
  { name: 'Calculadora', state: 'open', icon: <CalcIcon /> },
  { name: 'TeamViewer', state: 'pinned', icon: <RemoteIcon /> },
  { name: 'Excel', state: 'pinned', icon: <SheetIcon /> },
  { name: 'Escáner', state: 'pinned', icon: <ScannerIcon /> },
  { name: 'Menu Principal', state: 'front', icon: <Swirl size={34} /> },
  { name: 'Word', state: 'open', icon: <SheetIcon word /> },
  { name: 'Paint', state: 'open', icon: <PaintIcon /> },
];

const GlassBackdrop = () => (
  <Glass viewBox="0 0 1366 23" preserveAspectRatio="none" aria-hidden="true">
    <defs>
      <filter id="soft" x="-10%" y="-50%" width="120%" height="200%">
        <feGaussianBlur stdDeviation="3" />
      </filter>
    </defs>
    <g filter="url(#soft)">
      <rect x="-20" width="140" height="23" fill="#abb58d" />
      <rect x="120" width="78" height="23" fill="#978f70" />
      <path d="M205-5H392L402 30H196Z" fill="#b9cb9f" />
      {[400, 592, 785, 980].map(x => (
        <path key={x} d={`M${x}-5h188v35h-188Z`} fill="#a7a988" />
      ))}
      <path d="M1175 0h85v23h-85Z" fill="#a5452f" />
      <ellipse cx="1198" cy="16" rx="11" ry="12" fill="#a9aa85" />
      {[200, 396, 592, 785, 980, 1175].map(x => (
        <circle key={x} cx={x} cy="0" r="4" fill="#b8742a" />
      ))}
      <path d="M238 16h90M430 16h95M626 16h90M820 16h95M1015 16h85" stroke="#7c8064" strokeWidth="5" opacity=".55" />
      <path d="M186 16h6M222 16h6M380 16h6M575 16h6M768 16h6M964 16h6M1158 16h6" stroke="#5f5945" strokeWidth="6" />
      <path d="M415 11h7v9h-7ZM608 11h7v9h-7Z" fill="#7b5638" />
      <path d="M800 9h6v11h-6Z" fill="#3f8a4c" />
      <path d="M807 9h6v7h-6ZM992 8h14v14h-14Z" fill="#b0342a" />
    </g>
  </Glass>
);

export default function App() {
  return (
    <Page>
      <GlobalStyle />
      <TitleBar>
        <GlassBackdrop />
        <OrbButton aria-label="Menú de aplicación">
          <Swirl size={38} framed />
        </OrbButton>
        <QuickArea>
          <QuickAccess>
            <button aria-label="Calendario"><Calendar /></button>
            <button aria-label="Salir"><PowerIcon size={15} /></button>
          </QuickAccess>
          <button aria-label="Personalizar">
            <Draw w={6} h={8}>
              <path d="M0 1h6" stroke={navy} strokeWidth="1.500" />
              <path d="M0 4h6L3 7.500Z" fill={navy} />
            </Draw>
          </button>
        </QuickArea>
        <WindowTitle>Menu Principal</WindowTitle>
        <WindowButtons>
          <WindowButton $kind="min" aria-label="Minimizar">
            <Draw w={12} h={5}><rect x=".5" y=".5" width="11" height="4" fill="#fff" stroke="#34566f" /></Draw>
          </WindowButton>
          <WindowButton $kind="max" aria-label="Restaurar">
            <Draw w={12} h={12}>
              <path d="M4 1.500h7v7H4Z" fill="#fff" stroke="#414a40" />
              <rect x="1.500" y="3.500" width="7" height="7" fill="#fff" stroke="#414a40" />
              <rect x="4" y="6" width="2" height="2" fill="#8c9781" stroke="#414a40" />
            </Draw>
          </WindowButton>
          <WindowButton $kind="close" aria-label="Cerrar">
            <Draw w={12} h={10}>
              <path d="M2 1l8 8M10 1L2 9" stroke="#4f3a38" strokeWidth="4" />
              <path d="M2 1l8 8M10 1L2 9" stroke="#fff" strokeWidth="2.400" />
            </Draw>
          </WindowButton>
        </WindowButtons>
      </TitleBar>

      <RibbonTabs>
        <RibbonTab>Inicio</RibbonTab>
        <OptionsButton>
          Opciones
          <Caret size={6} />
        </OptionsButton>
      </RibbonTabs>
      <RibbonPanel>
        <RibbonGroup>
          <BigButton aria-label="Cerrar Sistema"><PowerIcon size={31} /></BigButton>
          <GroupLabel>Cerrar Sistema</GroupLabel>
        </RibbonGroup>
      </RibbonPanel>

      <Workspace>
        <Side>
          <DockBar>
            <button aria-label="Opciones del panel"><Caret /></button>
            <button aria-label="Anclar"><Pin /></button>
            <button aria-label="Cerrar panel"><Cross /></button>
          </DockBar>
          <SideTitle>MENU</SideTitle>
          <Tree>
            {nodes.map(n => (
              <TreeRow key={n.label} $child={n.child} $active={n.active}>
                {!n.child && (
                  <Toggle $hidden={!n.toggle} aria-label={n.label}>
                    <Expander open={n.toggle === 'open'} />
                  </Toggle>
                )}
                {n.child ? <PageAdd /> : <HomeFolder />}
                <a href="#">{n.label}</a>
              </TreeRow>
            ))}
          </Tree>
          <Grip><Dots n={5} /></Grip>
          <StackButton $active>MENU</StackButton>
          <StackButton>&nbsp; ...</StackButton>
          <StackFooter>
            <StackMore aria-label="Más"><Caret size={5} color="#4a6a8c" /></StackMore>
          </StackFooter>
        </Side>
        <Splitter><Dots vertical n={5} /></Splitter>

        <Documents>
          <TabStrip>
            {docTabs.map(t => (
              <DocTab key={t.label} $active={t.active} $width={t.width}>
                <TabShape width={t.width} height="22" viewBox={`0 0 ${t.width} 22`} aria-hidden="true">
                  <path
                    d={`M0 21.500Q3 20 6 17L17 4Q20 .5 24 .5H${t.width - 3}Q${t.width - 1} .5 ${t.width - 1} 4V22`}
                    fill={t.active ? '#dfeafa' : '#aecbf0'}
                    stroke={line}
                  />
                </TabShape>
                <DocTabLabel $active={t.active}>{t.label}</DocTabLabel>
                <button aria-label={`Cerrar ${t.label}`}><BoxedCross /></button>
              </DocTab>
            ))}
            <StripTools>
              <button aria-label="Lista de documentos"><Caret /></button>
              <button aria-label="Cerrar documento"><Cross /></button>
            </StripTools>
          </TabStrip>
          <DocBody>
            <Viewer>
              <Toolbar>
                <ToolButton aria-label="Exportar"><ExportIcon /></ToolButton>
                <ToolButton aria-label="Imprimir"><PrintIcon /></ToolButton>
                <ToolButton aria-label="Actualizar"><RefreshIcon /></ToolButton>
                <ToolButton aria-label="Copiar"><CopyIcon /></ToolButton>
                <Divider />
                <ToolButton $framed aria-label="Parámetros"><ParamIcon /></ToolButton>
                <ToolButton aria-label="Árbol de grupos"><GroupTreeIcon /></ToolButton>
                <Divider />
                <ToolButton aria-label="Primera página"><NavIcon dir="l" end /></ToolButton>
                <ToolButton aria-label="Página anterior"><NavIcon dir="l" /></ToolButton>
                <ToolButton aria-label="Página siguiente"><NavIcon dir="r" /></ToolButton>
                <ToolButton aria-label="Última página"><NavIcon dir="r" end /></ToolButton>
                <Divider />
                <PageInput aria-label="Página" defaultValue="2" />
                <PageTotal>/3</PageTotal>
                <ToolButton aria-label="Buscar"><FindIcon /></ToolButton>
                <ToolButton $wide aria-label="Zoom"><ZoomIcon /><Caret size={6} color="#111" /></ToolButton>
                <Divider />
                <Brand>SAP CRYSTAL REPORTS®</Brand>
                <BrandClose aria-label="Cerrar vista"><BoxedCross gray /></BrandClose>
              </Toolbar>
              <ReportTabs>
                <ReportTab>Informe principal</ReportTab>
                <Divider />
              </ReportTabs>
              <Viewport>
                <Canvas>
                  <Sheet>
                    <Ledger>
                      <colgroup>
                        <Col $w={75} />
                        <Col $w={357} />
                        <Col $w={93} />
                        <Col $w={79} />
                        <Col $w={101} />
                      </colgroup>
                      <tbody>
                        {entries.map((e, i) =>
                          'month' in e ? (
                            <tr key={i}>
                              <Month colSpan={5}><MonthBox $focus={e.focus}>{e.month}</MonthBox></Month>
                            </tr>
                          ) : (
                            <tr key={i}>
                              <th>{e.day}</th>
                              <td>{e.text}</td>
                              <Amount $pad>{e.n[0]}</Amount>
                              <Amount $mark={e.mark}>{e.n[1]}</Amount>
                              <Amount>{e.n[2]}</Amount>
                            </tr>
                          ),
                        )}
                      </tbody>
                    </Ledger>
                    <SheetFooter>
                      <span>07/11/2018</span>
                      <span>Página 2 de 3</span>
                    </SheetFooter>
                  </Sheet>
                </Canvas>
                <ScrollBar>
                  <Caret color="#444" up />
                  <ScrollGap $grow={225} />
                  <Thumb>
                    <Draw w={8} h={9}><path d="M0 1.500h8M0 4.500h8M0 7.500h8" stroke="#555" /></Draw>
                  </Thumb>
                  <ScrollGap $grow={26} />
                  <Caret color="#444" />
                </ScrollBar>
              </Viewport>
              <ViewerStatus>
                <StatusField>Nº de página actual: 2</StatusField>
                <StatusField>Nº total de páginas: 3</StatusField>
                <StatusField>Factor de zoom: 100%</StatusField>
              </ViewerStatus>
            </Viewer>
          </DocBody>
        </Documents>
      </Workspace>

      <InfoBar>
        <InfoList>
          <InfoItem><GearIcon />...</InfoItem>
          <InfoItem><GlobeIcon /><a href="#">www.sehs.org.pe</a></InfoItem>
          <InfoItem><HouseIcon />7114 - SEHS MPS</InfoItem>
          <InfoItem $gap={8}><UserIcon />boris.ayala</InfoItem>
          <InfoItem><ScreenIcon />DANSEHS</InfoItem>
          <InfoItem><CashIcon />SOLES</InfoItem>
          <InfoItem><CheckIcon />18</InfoItem>
        </InfoList>
      </InfoBar>

      <TaskBar>
        <StartButton aria-label="Inicio"><StartOrb /></StartButton>
        <TaskList>
          {tasks.map(t => (
            <TaskButton key={t.name} $state={t.state} aria-label={t.name}>{t.icon}</TaskButton>
          ))}
        </TaskList>
        <Tray>
          <Language>ES</Language>
          <TrayIcons>
            <Caret color="#fff" up />
            <Draw w={17} h={15}>
              <path d="M3 1v13" stroke="#fff" strokeWidth="2" />
              <path d="M4 2h5v5H4ZM10 4h5l-2 4h-3Z" fill="#fff" />
            </Draw>
            <Draw w={16} h={15}>
              <rect x="4" y="3.500" width="11" height="7.500" stroke="#fff" strokeWidth="1.500" />
              <path d="M6 14h8M10 11v3M2.500 6v8h3M1 1v2M4 1v2" stroke="#fff" strokeWidth="1.400" />
              <path d="M.5 3h4v3h-4Z" fill="#fff" />
            </Draw>
            <Draw w={16} h={15}>
              <path d="M1 5h2.500L7 1.500v12L3.500 10H1Z" fill="#fff" />
              <path d="M9 5q2 2.500 0 5M11 3.500q3.500 4 0 8M13 2q5 5.500 0 11" stroke="#e4e4e4" />
            </Draw>
          </TrayIcons>
          <Clock>03:26 p.m. 07/11/2018</Clock>
          <ShowDesktop aria-label="Mostrar escritorio" />
        </Tray>
      </TaskBar>
    </Page>
  );
}
